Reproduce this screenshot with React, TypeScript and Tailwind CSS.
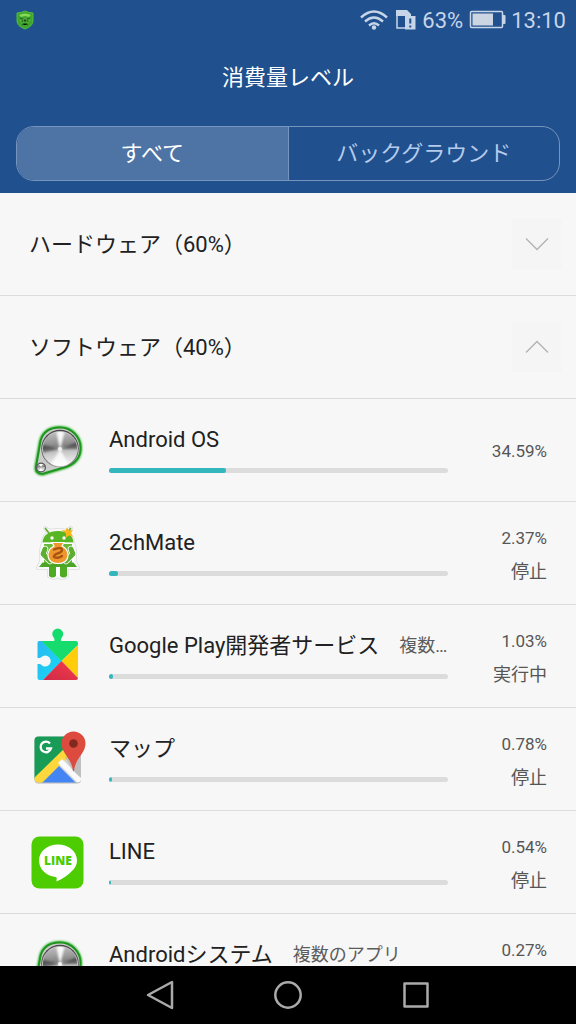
import { useState } from 'react';
import type { ReactNode } from 'react';

interface AppUsage {
  name: string;
  note?: string;
  percent: number;
  barWidth: number;
  status?: string;
  icon: ReactNode;
}

function MetalIcon({ id }: { id: string }) {
  return (
    <svg viewBox="0 0 56 56" className="size-14" aria-hidden="true">
      <defs>
        <linearGradient id={`${id}-metal`} x1="0" y1="0" x2="0.1" y2="1">
          <stop offset="0" stopColor="#c4c4c4" />
          <stop offset="0.25" stopColor="#a4a4a4" />
          <stop offset="0.46" stopColor="#858585" />
          <stop offset="0.56" stopColor="#bcbcbc" />
          <stop offset="1" stopColor="#f4f4f4" />
        </linearGradient>
        <filter id={`${id}-glow`} x="-20%" y="-20%" width="140%" height="140%">
          <feGaussianBlur stdDeviation="1.3" />
        </filter>
        <clipPath id={`${id}-disc`}>
          <circle cx="30" cy="27" r="17" />
        </clipPath>
      </defs>
      <path d="M10 18C13 9 20 5 30 5a21 21 0 0 1 21 21c0 11-7 17-16 20L13 53c-5 0-8-3-8-7z" fill="#555" opacity="0.8" filter={`url(#${id}-glow)`} />
      <path d="M10.500 19C13 10 20 5.500 30 5.500A20.500 20.500 0 0 1 50.500 26c0 10-6 16-15 19l-22 6.500c-5 1-8-2-7.500-6.500z" fill="none" stroke="#35c535" strokeWidth="3" filter={`url(#${id}-glow)`} />
      <path d="M10.500 19C13 10 20 5.500 30 5.500A20.500 20.500 0 0 1 50.500 26c0 10-6 16-15 19l-22 6.500c-5 1-8-2-7.500-6.500z" fill="#c9ccc9" stroke="#1e961e" strokeWidth="2" />
      <circle cx="30" cy="26.500" r="18.700" fill="#4a4a4a" />
      <circle cx="30" cy="27" r="17.500" fill={`url(#${id}-metal)`} stroke="#d2d2d2" strokeWidth="0.800" />
      <g clipPath={`url(#${id}-disc)`}>
        <g filter={`url(#${id}-glow)`}>
          <path d="M30 28 26 8h9z" fill="#fff" opacity="0.9" />
          <path d="m30 27-11 19h22z" fill="#fff" opacity="0.8" />
          <path d="M30 27 10 22v9z" fill="#333" opacity="0.6" />
          <path d="m30 27 20-8v8z" fill="#333" opacity="0.6" />
        </g>
        <circle cx="30" cy="27" r="2" fill="#fff" opacity="0.8" />
      </g>
      <circle cx="11" cy="45.500" r="5" fill="#555" />
      <circle cx="11" cy="45.500" r="3.800" fill={`url(#${id}-metal)`} />
      <path d="m11 45-2-3h4zM11 46l-2 3h4z" fill="#fff" />
    </svg>
  );
}

function MateIcon() {
  return (
    <svg viewBox="0 0 56 56" className="size-14" aria-hidden="true">
      <path
        d="m15 3 4 5c-4 2-6 5-6 10l-2 8v11l-3 6h11v8q4 3 8 1h2q4 2 8-1v-8h11l-3-6V26l-2-8c0-5-2-8-6-10l4-5-5 3q-8-2-16 0z"
        fill="#fff"
        stroke="#dedede"
        strokeWidth="4"
        strokeLinejoin="round"
      />
      <path
        d="m15 3 4 5c-4 2-6 5-6 10l-2 8v11l-3 6h11v8q4 3 8 1h2q4 2 8-1v-8h11l-3-6V26l-2-8c0-5-2-8-6-10l4-5-5 3q-8-2-16 0z"
        fill="#fff"
        stroke="#f8f8f8"
        strokeWidth="2.500"
        strokeLinejoin="round"
      />
      <path d="m15.500 3.500 4.500 6M40.500 3.500 36 9.500" stroke="#69ad39" strokeWidth="1.800" strokeLinecap="round" />
      <path d="M14 19h28v19H14z" fill="#6aba39" />
      <path d="M12.500 37.500h31L47 42H9z" fill="#4da526" />
      <path d="m15 24-2 5 7 7M41 24l2 5-7 7" fill="none" stroke="#fff" strokeWidth="6.500" strokeLinecap="round" strokeLinejoin="round" />
      <path d="m15 24-2 5 7 7M41 24l2 5-7 7" fill="none" stroke="#5eae32" strokeWidth="4.800" strokeLinecap="round" strokeLinejoin="round" />
      <path d="M12.500 17.500C13 10 19 6 28 6s15 4 15.500 11.500z" fill="#58b523" />
      <path d="M12.500 18.300h31" stroke="#fff" strokeWidth="1.200" />
      <circle cx="22" cy="13" r="1.700" fill="#fff" />
      <circle cx="34" cy="13" r="1.700" fill="#fff" />
      <path d="m31.500 5 4 .5 1.500-3 2 3 4-.5-2 3 2 4-4-1.500-3 2v-4z" fill="#f9b51c" />
      <path d="M19 42h7v9q-3.500 3-7 0zM30 42h7v9q-3.500 3-7 0z" fill="#4fab23" />
      <path d="M22 17.500h12l-2 3.500c9 5 8 17.500-4 17.500s-13-12.500-4-17.500z" fill="#ef972f" stroke="#fff" strokeWidth="1.200" />
      <path d="M24 24.500q8-3 8 .5c0 4-9 3-8 7q4 2 8-1" fill="none" stroke="#a95310" strokeWidth="2.400" strokeLinecap="round" />
    </svg>
  );
}

function PlayServicesIcon() {
  return (
    <svg viewBox="0 0 56 56" className="size-14" aria-hidden="true">
      <defs>
        <clipPath id="puzzle">
          <path d="M9 13h15q1-1 0-3a5.500 5.500 0 1 1 7.500 0q-1 2 0 3H46q2 0 2 2v35q0 2-2 2H9.500q-2 0-2-2V36h2q1 0 2 1a5.500 5.500 0 1 0 0-8q-1 1-2 1h-2V15q0-2 1.500-2z" />
        </clipPath>
        <linearGradient id="play-blue" x1="0" y1="0" x2="1" y2="1">
          <stop offset="0" stopColor="#2db5ee" />
          <stop offset="1" stopColor="#13dcf8" />
        </linearGradient>
        <linearGradient id="play-red" x1="0" y1="1" x2="1" y2="0">
          <stop offset="0" stopColor="#cd2848" />
          <stop offset="1" stopColor="#f53e48" />
        </linearGradient>
      </defs>
      <g clipPath="url(#puzzle)">
        <path d="M5 10v44h6l21-21L9 10z" fill="url(#play-blue)" />
        <path d="M10.500 12V0H48v17L31.500 33z" fill="#15dc6d" />
        <path d="M48 17v33L31.500 33z" fill="#ffcd09" />
        <path d="m12 53 19.500-20L50 52v2z" fill="url(#play-red)" />
      </g>
    </svg>
  );
}

function MapsIcon() {
  return (
    <svg viewBox="0 0 56 56" className="size-14" aria-hidden="true">
      <defs>
        <clipPath id="map-tile">
          <rect x="4.500" y="5.500" width="46.500" height="46" rx="4" />
        </clipPath>
      </defs>
      <rect x="4.500" y="6.500" width="46.500" height="46" rx="4" fill="#b5b5b5" />
      <g clipPath="url(#map-tile)">
        <path d="M4 5h48v48H4z" fill="#d5d5d5" />
        <path d="M4 5h44L4 48z" fill="#189b57" />
        <path d="m9 54 19-20 20 20z" fill="#4485f4" />
        <path d="M3 48 38 14l5 7L10 54H3z" fill="#fdd83d" />
        <path d="m28 32 4-4 21 21v4h-4z" fill="#fafafa" />
        <path d="m35 26 8 14 9 8V16z" fill="#999" opacity="0.35" />
      </g>
      <path d="M20 12.500a5.300 5.300 0 1 0 1 5h-5" fill="none" stroke="#fff" strokeWidth="2.300" />
      <path d="M43.500.5A12 12 0 0 0 31.500 12.500c0 10 10 14 11.500 27.500h1C45.500 26.500 55.500 22.500 55.500 12.500a12 12 0 0 0-12-12z" fill="#dd4b3e" />
      <circle cx="43.500" cy="12.500" r="4.300" fill="#81291f" />
    </svg>
  );
}

function LineIcon() {
  return (
    <svg viewBox="0 0 56 56" className="size-14" aria-hidden="true">
      <rect x="1.500" y="2.500" width="52" height="52" rx="8" fill="#4dcc00" />
      <path d="M28 10.500c11 0 19 7 19 16 0 4-2 7.500-5 10.500-4 4-9 8-15.500 10.500 0-2 1-4-1-4.500C16 42 9 35 9 26.500c0-9 8-16 19-16z" fill="#fff" />
      <text x="28" y="31" textAnchor="middle" className="fill-[#4dcc00] font-['Open_Sans',sans-serif] text-[12px] font-extrabold">LINE</text>
    </svg>
  );
}

function StatusBar() {
  return (
    <div className="flex h-10 items-center justify-between pr-2.5 pl-4 text-[#c7d5e9]">
      <svg viewBox="0 0 18 20" className="h-5 w-[18px]" aria-hidden="true">
        <path d="M9 1q4 2 8 2v8q0 5-8 8-8-3-8-8V3q4 0 8-2z" fill="#3fa52e" stroke="#52bd3a" />
        <path d="M3 5q6-3 12 0l-2 2-4-1-4 1z" fill="#86d956" />
        <path d="m4 8 3 1M14 8l-3 1M5 12l3-2M13 12l-3-2M6 15l3-2 3 2" stroke="#1f6a22" strokeWidth="1.200" />
        <path d="M8 9h2v3H8zM4 10l2 3M14 10l-2 3" stroke="#76cb4a" strokeWidth="0.700" />
      </svg>
      <div className="flex items-center">
        <svg viewBox="0 0 28 20" className="mr-2 h-5 w-7" fill="none" stroke="currentColor" strokeWidth="2.400" aria-hidden="true">
          <path d="M1 7.500Q14-4.500 27 7.500M5 11.500q9-8 18 0M9 15.500q5-4.500 10 0" />
          <circle cx="14" cy="17.500" r="2.200" fill="currentColor" stroke="none" />
        </svg>
        <svg viewBox="0 0 20 20" className="mr-1.5 size-5" aria-hidden="true">
          <path d="M9 18H1V5h13v1" fill="none" stroke="currentColor" strokeWidth="1.500" />
          <path d="M0 0h11l4 4v2H0z" fill="currentColor" />
          <path d="M9 6h10.500v13.500H9z" fill="currentColor" />
          <path d="M14.300 8.500v5M14.300 15.500v2" stroke="#20508d" strokeWidth="2" />
        </svg>
        <span className="text-[22px]">63%</span>
        <svg viewBox="0 0 38 20" className="mr-1 ml-1.5 h-5 w-[38px]" aria-hidden="true">
          <rect x="1.500" y="1.500" width="32" height="16" rx="1" fill="none" stroke="currentColor" strokeWidth="1.500" />
          <path d="M3.500 3.500H24v12H3.500z" fill="#ccd5e2" />
          <path d="M34 5h1.500q1 0 1 1v7q0 1-1 1H34z" fill="currentColor" />
        </svg>
        <span className="text-[22px]">13:10</span>
      </div>
    </div>
  );
}

interface SectionButtonProps {
  label: string;
  open: boolean;
  onClick: () => void;
}

function SectionButton({ label, open, onClick }: SectionButtonProps) {
  return (
    <button
      type="button"
      aria-expanded={open}
      onClick={onClick}
      className="flex h-[103px] w-full shrink-0 items-center justify-between border-b border-[#dcdcdc] pr-3.5 pl-[29px] text-left text-[22px]"
    >
      {label}
      <span className="flex size-[50px] items-center justify-center bg-[#f5f5f5]">
        <svg viewBox="0 0 24 14" className="h-3.5 w-6" fill="none" stroke="#b3b3b3" strokeWidth="1.300" aria-hidden="true">
          {open ? <path d="M1 12.500 12 1.500l11 11" /> : <path d="m1 1.500 11 11 11-11" />}
        </svg>
      </span>
    </button>
  );
}

function UsageRow({ app }: { app: AppUsage }) {
  return (
    <li className="flex h-[103px] items-start border-b border-[#dcdcdc] pr-[29px] pl-[30px]">
      <div className="mt-[23px] shrink-0">{app.icon}</div>
      <div className="mt-[25px] ml-[23px] min-w-0 flex-1">
        <div className="flex h-[30px] items-center gap-5 whitespace-nowrap">
          <span className="text-[22px]">{app.name}</span>
          {app.note && <span className="truncate text-[18px] text-[#5c5c5c]">{app.note}</span>}
        </div>
        <div
          role="progressbar"
          aria-label={app.name}
          aria-valuenow={app.percent}
          className="mt-3.5 h-[5px] overflow-hidden rounded-full bg-[#dcdcdc]"
        >
          <div className="h-full rounded-r-xs bg-[#34b6bd]" style={{ width: `${app.barWidth}%` }} />
        </div>
      </div>
      <div className="flex w-[99px] shrink-0 flex-col justify-center self-stretch pt-[3px] text-right leading-[33px] text-[#565656]">
        <span className="text-[17px]">{app.percent.toFixed(2)}%</span>
        {app.status && <span className="text-[18px]">{app.status}</span>}
      </div>
    </li>
  );
}

const apps: AppUsage[] = [
  { name: 'Android OS', percent: 34.59, barWidth: 34.59, icon: <MetalIcon id="os" /> },
  { name: '2chMate', percent: 2.37, barWidth: 2.6, status: '停止', icon: <MateIcon /> },
  { name: 'Google Play開発者サービス', note: '複数のアプリ', percent: 1.03, barWidth: 1.2, status: '実行中', icon: <PlayServicesIcon /> },
  { name: 'マップ', percent: 0.78, barWidth: 0.9, status: '停止', icon: <MapsIcon /> },
  { name: 'LINE', percent: 0.54, barWidth: 0.7, status: '停止', icon: <LineIcon /> },
  { name: 'Androidシステム', note: '複数のアプリ', percent: 0.27, barWidth: 0.4, status: '実行中', icon: <MetalIcon id="system" /> },
];

export default function App() {
  const [tab, setTab] = useState<'all' | 'background'>('all');
  const [hardwareOpen, setHardwareOpen] = useState(false);
  const [softwareOpen, setSoftwareOpen] = useState(true);

  return (
    <div className="flex h-screen flex-col overflow-hidden bg-[#f7f7f7] font-[Roboto,'Noto_Sans_CJK_JP',sans-serif] text-[#212121]" lang="ja">
      <header className="shrink-0 bg-[#20508d] pb-3">
        <StatusBar />
        <h1 className="flex h-[74px] items-center justify-center text-[22px] text-white">消費量レベル</h1>
        {/* Tabs */}
        <div role="tablist" className="mx-4 mt-3 flex h-[55px] overflow-hidden rounded-[18px] border border-[#7695be]">
          <button
            type="button"
            role="tab"
            aria-selected={tab === 'all'}
            onClick={() => setTab('all')}
            className={`flex-1 border-r border-[#7695be] text-[22px] ${tab === 'all' ? 'bg-[#4e74a5] text-white' : 'text-[#b4cbeb]'}`}
          >
            すべて
          </button>
          <button
            type="button"
            role="tab"
            aria-selected={tab === 'background'}
            onClick={() => setTab('background')}
            className={`flex-1 text-[22px] ${tab === 'background' ? 'bg-[#4e74a5] text-white' : 'text-[#b4cbeb]'}`}
          >
            バックグラウンド
          </button>
        </div>
      </header>

      <main className="min-h-0 flex-1 overflow-y-auto [scrollbar-width:none]">
        <SectionButton label="ハードウェア（60%）" open={hardwareOpen} onClick={() => setHardwareOpen(!hardwareOpen)} />
        <SectionButton label="ソフトウェア（40%）" open={softwareOpen} onClick={() => setSoftwareOpen(!softwareOpen)} />
        {softwareOpen && (
          <ul>
            {apps.map((app) => (
              <UsageRow key={app.name} app={app} />
            ))}
          </ul>
        )}
      </main>

      {/* Navigation bar */}
      <nav className="flex h-[58px] shrink-0 items-center justify-center gap-24 bg-black">
        <button type="button" aria-label="戻る">
          <svg viewBox="0 0 32 32" className="size-8" fill="none" stroke="#aaa" strokeWidth="2.500" strokeLinejoin="round">
            <path d="M28 3v26L4 16z" />
          </svg>
        </button>
        <button type="button" aria-label="ホーム">
          <svg viewBox="0 0 32 32" className="size-8" fill="none" stroke="#aaa" strokeWidth="2.500">
            <circle cx="16" cy="16" r="12.700" />
          </svg>
        </button>
        <button type="button" aria-label="最近使ったアプリ">
          <svg viewBox="0 0 32 32" className="size-8" fill="none" stroke="#aaa" strokeWidth="2.500" strokeLinejoin="round">
            <path d="M4.500 4.500h23v23h-23z" />
          </svg>
        </button>
      </nav>
    </div>
  );
}
